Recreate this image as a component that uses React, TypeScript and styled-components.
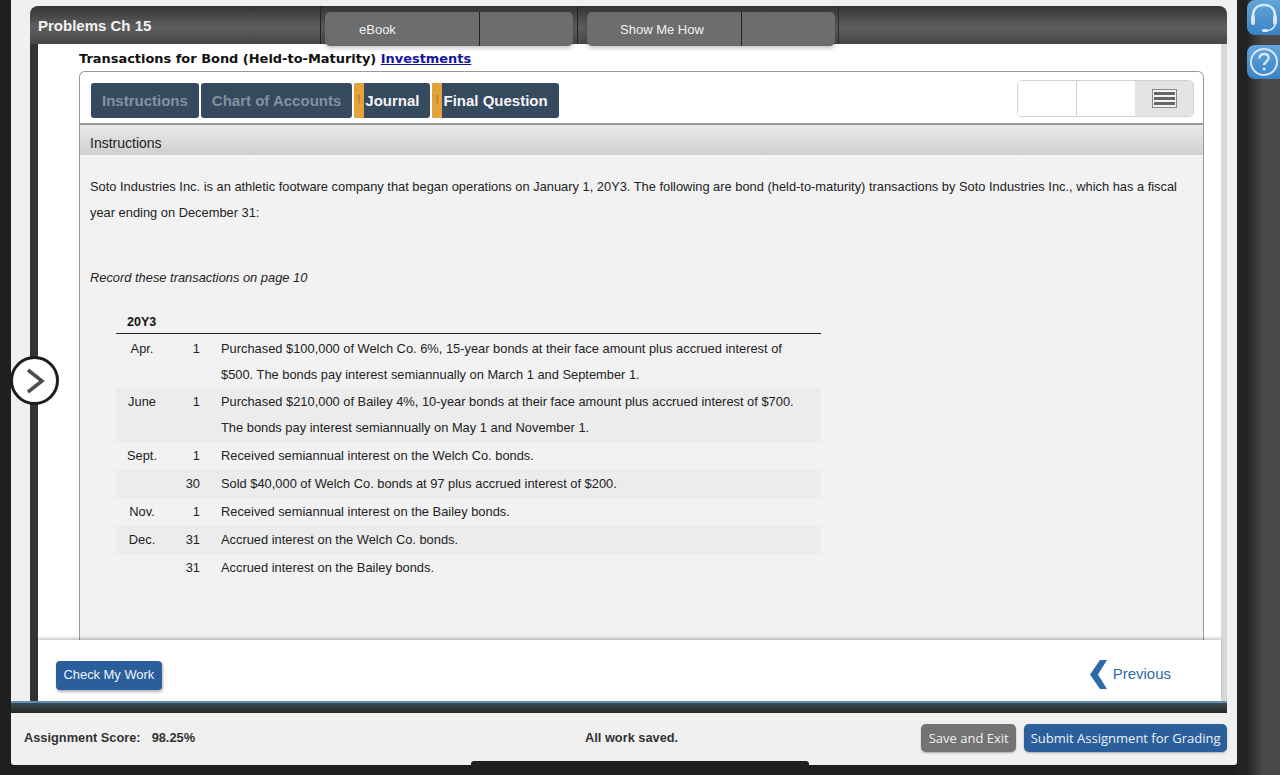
import React from "react";
import styled, { createGlobalStyle } from "styled-components";

const GlobalStyle = createGlobalStyle`
  html, body {
    margin: 0;
    padding: 0;
    overflow: hidden;
    background: #1f1f1f;
  }
  * {
    box-sizing: border-box;
  }
`;

const sans = `"Liberation Sans", Arial, sans-serif`;

const Page = styled.div`
  position: relative;
  display: flex;
  width: 1280px;
  height: 775px;
  padding-left: 11px;
  background: #1f1f1f;
  font-family: ${sans};
  color: #222;
`;

const Frame = styled.div`
  display: flex;
  flex-direction: column;
  width: 1226px;
  height: 765px;
  padding-top: 6px;
  background: #f0f0f0;
  border-radius: 0 0 3px 3px;
`;

const Rail = styled.div`
  display: flex;
  flex-direction: column;
  gap: 10px;
  width: 43px;
  height: 775px;
  padding-left: 10px;
  overflow: hidden;
  background: linear-gradient(90deg, #222 0, #222 9px, #4a4a4a 26px, #4a4a4a 100%);
`;

const RailButton = styled.div<{ $height: number }>`
  display: flex;
  align-items: center;
  flex: none;
  width: 40px;
  height: ${(p) => p.$height}px;
  padding-left: 2px;
  border-radius: 8px 0 0 8px;
  background: linear-gradient(180deg, #63a5dc, #3a83c4);
`;

const Window = styled.div`
  display: flex;
  flex-direction: column;
  margin: 0 10px 0 19px;
`;

const WindowHeader = styled.div`
  position: relative;
  z-index: 2;
  display: flex;
  height: 38px;
  border-radius: 8px 8px 0 0;
  background: linear-gradient(180deg, #333 0%, #5e5e5e 55%, #474747 100%);
`;

const WindowTitle = styled.div`
  width: 290px;
  padding: 11px 0 0 8px;
  font-size: 15px;
  font-weight: 700;
  color: #f2f2f2;
`;

const TabSection = styled.div<{ $width: number; $left: number }>`
  width: ${(p) => p.$width}px;
  padding: 6px 0 0 ${(p) => p.$left}px;
  border-left: 1px solid #222;
`;

const EndCap = styled.div`
  border-left: 1px solid #2c2c2c;
`;

const ToolTab = styled.div<{ $labelWidth: number; $width: number; $indent: number }>`
  display: flex;
  width: ${(p) => p.$width}px;
  height: 34px;
  border-radius: 5px;
  background: #6d6d6d;
  box-shadow: 0 2px 4px rgba(0, 0, 0, 0.25);

  span {
    width: ${(p) => p.$labelWidth}px;
    padding: 10px 0 0 ${(p) => p.$indent}px;
    font-size: 13px;
    color: #f0f0f0;
    border-right: 1px solid #222;
  }
`;

const WindowBody = styled.div`
  display: flex;
  flex-direction: column;
  height: 657px;
  border-left: 8px solid #333;
  border-right: 6px solid #d9d9d9;
  background: #fff;
`;

const Scroller = styled.div`
  flex: none;
  height: 596px;
  padding-left: 41px;
  padding-right: 17px;
  overflow: hidden;
`;

const Heading = styled.div`
  height: 27px;
  padding-top: 7px;
  font-family: "DejaVu Sans", Verdana, sans-serif;
  font-size: 12.95px;
  font-weight: 700;
  color: #111;

  a {
    color: #1414a0;
    text-decoration: underline;
  }
`;

const TabCard = styled.div`
  display: flex;
  align-items: flex-start;
  justify-content: space-between;
  height: 54px;
  padding: 8px 9px 0 11px;
  border: 1px solid #999;
  border-bottom-width: 2px;
  border-radius: 6px 6px 0 0;
`;

const TabRow = styled.div`
  display: flex;
  gap: 2px;
  margin-top: 3px;
`;

const Tab = styled.div<{ $dim?: boolean; $flag?: boolean }>`
  display: flex;
  align-items: center;
  height: 35px;
  padding: 0 11px 0 ${(p) => (p.$flag ? "0" : "11px")};
  border-radius: 3px;
  background: #35495f;
  font-size: 15px;
  font-weight: 700;
  color: ${(p) => (p.$dim ? "#84919f" : "#f4f4f4")};
`;

const Flag = styled.i`
  display: block;
  align-self: stretch;
  width: 10px;
  margin-right: 1px;
  padding: 10px 0 0 3px;
  border-radius: 3px 0 0 3px;
  background: #e5a23a;
  font-size: 12px;
  font-style: normal;
  font-weight: 400;
  color: #b5701a;
`;

const ViewToggle = styled.div`
  display: flex;
  width: 177px;
  height: 37px;
  border: 1px solid #d2d2d2;
  border-radius: 5px;
  overflow: hidden;
`;

const ViewCell = styled.div<{ $active?: boolean }>`
  display: flex;
  flex: 1;
  align-items: center;
  justify-content: center;
  background: ${(p) => (p.$active ? "#e4e4e4" : "#fff")};
  border-left: ${(p) => (p.$active ? "none" : "1px solid #d2d2d2")};

  &:first-child {
    border-left: none;
  }
`;

const Panel = styled.div`
  height: 530px;
  border: 1px solid #999;
  border-top: none;
  background: #f2f2f2;
`;

const PanelTitle = styled.div`
  height: 30px;
  padding: 10px 0 0 10px;
  font-size: 14px;
  color: #222;
  background: linear-gradient(180deg, #e9e9e9, #cfcfcf);
`;

const PanelText = styled.p`
  margin: 19px 10px 0;
  font-size: 12.87px;
  line-height: 26px;
  color: #222;
`;

const PanelNote = styled.p`
  margin: 39px 10px 0;
  font-size: 12.87px;
  font-style: italic;
  line-height: 26px;
  color: #222;
`;

const Schedule = styled.table`
  width: 705px;
  margin: 17px 0 0 36px;
  border-collapse: collapse;
  font-size: 12.87px;

  tbody tr:first-child td {
    padding-top: 2px;
    padding-bottom: 0;
  }
`;

const YearCell = styled.th`
  height: 25px;
  padding: 4px 0 0 11px;
  font-size: 12.5px;
  font-weight: 700;
  text-align: left;
  color: #111;
  border-bottom: 1.5px solid #222;
`;

const Entry = styled.tr<{ $shade?: boolean }>`
  background: ${(p) => (p.$shade ? "#ececec" : "transparent")};
`;

const MonthCell = styled.td`
  width: 52px;
  padding: 1px 0;
  text-align: center;
  vertical-align: top;
  line-height: 26px;
  color: #222;
`;

const DayCell = styled.td`
  width: 32px;
  padding: 1px 0;
  text-align: right;
  vertical-align: top;
  line-height: 26px;
  color: #222;
`;

const TextCell = styled.td`
  padding: 1px 0 1px 21px;
  vertical-align: top;
  line-height: 26px;
  color: #222;
`;

const ActionBar = styled.div`
  position: relative;
  display: flex;
  flex: 1;
  align-items: flex-start;
  justify-content: space-between;
  padding: 21px 50px 0 18px;
  background: #fff;
  box-shadow: 0 -2px 3px rgba(0, 0, 0, 0.22);
`;

const CheckButton = styled.div`
  height: 29px;
  padding: 6px 7.5px 0;
  border-radius: 4px;
  background: #2a5f9c;
  box-shadow: 1px 2px 3px rgba(0, 0, 0, 0.3);
  font-size: 12.9px;
  color: #eef4fa;
`;

const PreviousLink = styled.div`
  display: flex;
  align-items: center;
  gap: 6px;
  margin-top: -1px;
  font-size: 15px;
  color: #2f6aa8;

  span {
    margin-top: -3px;
  }
`;

const StatusBand = styled.div`
  height: 12px;
  margin-right: 10px;
  border-top: 2px solid #5c93b5;
  background: linear-gradient(180deg, #3a4a52, #262626);
`;

const Footer = styled.div`
  position: relative;
  display: flex;
  flex: 1;
  align-items: center;
  padding: 0 10px 4px 13px;
  font-size: 12.8px;
  font-weight: 700;
  color: #333;
`;

const Score = styled.div`
  display: flex;
  gap: 11px;
  width: 561px;
`;

const Saved = styled.div`
  flex: 1;
`;

const FooterButtons = styled.div`
  display: flex;
  gap: 8px;
  margin-top: 1px;
`;

const FooterButton = styled.div<{ $primary?: boolean }>`
  height: 28px;
  padding: 0 ${(p) => (p.$primary ? "6.5px" : "7.5px")};
  border-radius: 5px;
  background: ${(p) => (p.$primary ? "#2a5f9c" : "#737373")};
  box-shadow: 0 1px 2px rgba(0, 0, 0, 0.3);
  font-family: "Open Sans", sans-serif;
  font-size: 13px;
  font-weight: 400;
  line-height: 28px;
  color: #eef1f4;
`;

const HomeBar = styled.div`
  position: absolute;
  left: 460px;
  bottom: 0;
  width: 338px;
  height: 4px;
  border-radius: 3px 3px 0 0;
  background: #1f1f1f;
`;

const NextCircle = styled.div`
  position: absolute;
  left: 10px;
  top: 356px;
  display: flex;
  align-items: center;
  justify-content: center;
  width: 49px;
  height: 49px;
  border: 3px solid #1c1c1c;
  border-radius: 50%;
  background: #fff;
`;

const entries = [
  { month: "Apr.", day: "1", lines: ["Purchased $100,000 of Welch Co. 6%, 15-year bonds at their face amount plus accrued interest of", "$500. The bonds pay interest semiannually on March 1 and September 1."] },
  { month: "June", day: "1", shade: true, lines: ["Purchased $210,000 of Bailey 4%, 10-year bonds at their face amount plus accrued interest of $700.", "The bonds pay interest semiannually on May 1 and November 1."] },
  { month: "Sept.", day: "1", lines: ["Received semiannual interest on the Welch Co. bonds."] },
  { month: "", day: "30", shade: true, lines: ["Sold $40,000 of Welch Co. bonds at 97 plus accrued interest of $200."] },
  { month: "Nov.", day: "1", lines: ["Received semiannual interest on the Bailey bonds."] },
  { month: "Dec.", day: "31", shade: true, lines: ["Accrued interest on the Welch Co. bonds."] },
  { month: "", day: "31", lines: ["Accrued interest on the Bailey bonds."] },
];

export default function App() {
  return (
    <Page>
      <GlobalStyle />
      <Frame>
        <Window>
          <WindowHeader>
            <WindowTitle>Problems Ch 15</WindowTitle>
            <TabSection $width={257} $left={4}>
              <ToolTab $width={248} $labelWidth={155} $indent={34}>
                <span>eBook</span>
              </ToolTab>
            </TabSection>
            <TabSection $width={261} $left={9}>
              <ToolTab $width={248} $labelWidth={155} $indent={33}>
                <span>Show Me How</span>
              </ToolTab>
            </TabSection>
            <EndCap />
          </WindowHeader>
          <WindowBody>
            <Scroller>
              <Heading>
                Transactions for Bond (Held-to-Maturity) <a href="#investments">Investments</a>
              </Heading>
              <TabCard>
                <TabRow>
                  <Tab $dim>Instructions</Tab>
                  <Tab $dim>Chart of Accounts</Tab>
                  <Tab $flag>
                    <Flag>!</Flag>Journal
                  </Tab>
                  <Tab $flag>
                    <Flag>!</Flag>Final Question
                  </Tab>
                </TabRow>
                <ViewToggle>
                  <ViewCell />
                  <ViewCell />
                  <ViewCell $active>
                    <svg width="25" height="19" viewBox="0 0 25 19">
                      <rect x="0.5" y="0.5" width="24" height="18" fill="#f4f4f4" stroke="#8a8a8a" />
                      <rect x="2" y="3" width="21" height="3" fill="#666" />
                      <rect x="2" y="8" width="21" height="3" fill="#666" />
                      <rect x="2" y="13" width="21" height="3" fill="#666" />
                    </svg>
                  </ViewCell>
                </ViewToggle>
              </TabCard>
              <Panel>
                <PanelTitle>Instructions</PanelTitle>
                <PanelText>
                  Soto Industries Inc. is an athletic footware company that began operations on January 1, 20Y3. The following are bond (held-to-maturity) transactions by Soto Industries Inc., which has a fiscal year ending on December 31:
                </PanelText>
                <PanelNote>Record these transactions on page 10</PanelNote>
                <Schedule>
                  <thead>
                    <tr>
                      <YearCell colSpan={3}>20Y3</YearCell>
                    </tr>
                  </thead>
                  <tbody>
                    {entries.map((entry, i) => (
                      <Entry key={i} $shade={entry.shade}>
                        <MonthCell>{entry.month}</MonthCell>
                        <DayCell>{entry.day}</DayCell>
                        <TextCell>
                          {entry.lines.map((line) => (
                            <div key={line}>{line}</div>
                          ))}
                        </TextCell>
                      </Entry>
                    ))}
                  </tbody>
                </Schedule>
              </Panel>
            </Scroller>
            <ActionBar>
              <CheckButton>Check My Work</CheckButton>
              <PreviousLink>
                <svg width="17" height="29" viewBox="0 0 17 29">
                  <path d="M10 0h7L8 14.500 17 29h-7L0 14.500z" fill="#2f6aa8" />
                </svg>
                <span>Previous</span>
              </PreviousLink>
            </ActionBar>
          </WindowBody>
        </Window>
        <StatusBand />
        <Footer>
          <Score>
            <span>Assignment Score:</span>
            <span>98.25%</span>
          </Score>
          <Saved>All work saved.</Saved>
          <FooterButtons>
            <FooterButton>Save and Exit</FooterButton>
            <FooterButton $primary>Submit Assignment for Grading</FooterButton>
          </FooterButtons>
          <HomeBar />
        </Footer>
      </Frame>
      <Rail>
        <RailButton $height={35}>
          <svg width="30" height="32" viewBox="0 0 30 32" fill="none" stroke="#d6e7f5" strokeLinecap="round">
            <path d="M4 17V14C4 7 8 3 15 3s11 4 11 11v3" strokeWidth="2.500" />
            <rect x="2" y="13" width="4" height="10" rx="2" fill="#d6e7f5" strokeWidth="0" />
            <rect x="24" y="13" width="4" height="10" rx="2" fill="#d6e7f5" strokeWidth="0" />
            <path d="M26 23c-1 4-4 5-8 6" strokeWidth="1.500" />
            <rect x="13" y="27" width="6" height="3" rx="1.500" fill="#d6e7f5" strokeWidth="0" />
          </svg>
        </RailButton>
        <RailButton $height={34}>
          <svg width="30" height="30" viewBox="0 0 30 30" fill="none" stroke="#d6e7f5" strokeWidth="2">
            <circle cx="15" cy="15" r="13" />
            <path d="M10.500 11.500c0-3 2-4.500 4.600-4.500 2.700 0 4.500 1.600 4.500 4 0 3.600-4.500 3.800-4.500 7" strokeWidth="2.400" />
            <circle cx="15.100" cy="22" r="1.600" fill="#d6e7f5" stroke="none" />
          </svg>
        </RailButton>
      </Rail>
      <NextCircle>
        <svg width="20" height="26" viewBox="0 0 20 26" fill="none" stroke="#4d4d4d" strokeWidth="3.500">
          <path d="M3 2l14 11L3 24" />
        </svg>
      </NextCircle>
    </Page>
  );
}
